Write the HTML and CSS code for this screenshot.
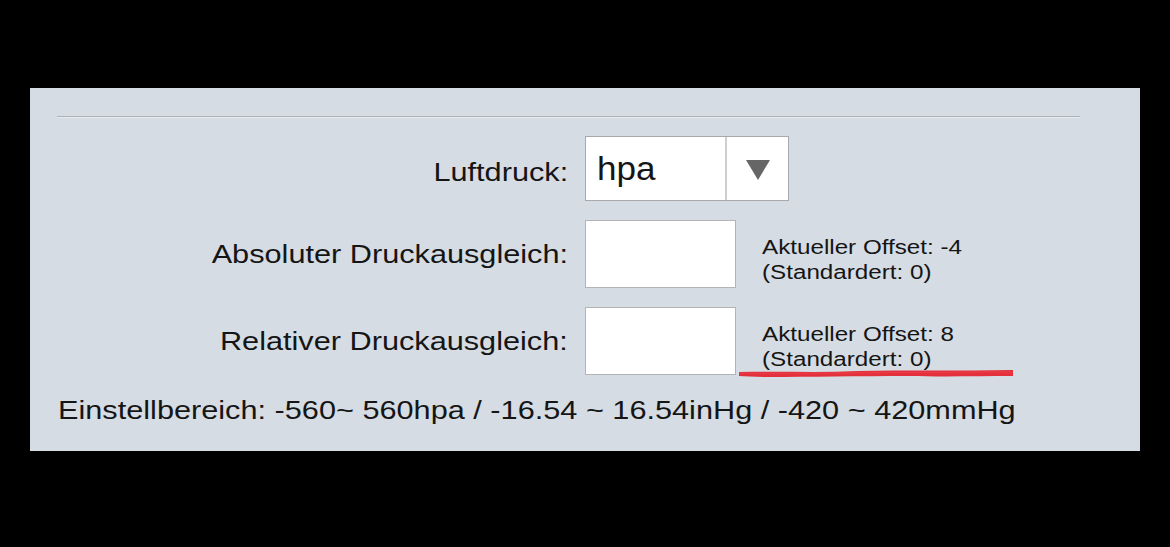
FILE: index.html
```html
<!DOCTYPE html>
<html lang="de">
<head>
<meta charset="utf-8">
<title>Luftdruck</title>
<link rel="stylesheet" href="styles.css">
</head>
<body>
<div class="panel">
  <div class="rule"></div>
  <div class="form">
    <div class="label label-select"><span class="wide-r">Luftdruck:</span></div>
    <div class="control">
      <div class="select">
        <span class="select-value"><span class="wide-l">hpa</span></span>
        <span class="select-btn"><svg width="24" height="20" viewBox="0 0 24 20"><polygon points="0,0 24,0 12,20" fill="#666"/></svg></span>
      </div>
    </div>
    <div class="label"><span class="wide-r">Absoluter Druckausgleich:</span></div>
    <div class="control">
      <div class="input"></div>
      <div class="hint"><span class="wide-h">Aktueller Offset: -4<br>(Standardert: 0)</span></div>
    </div>
    <div class="label"><span class="wide-r">Relativer Druckausgleich:</span></div>
    <div class="control">
      <div class="input"></div>
      <div class="hint"><span class="wide-h">Aktueller Offset: 8<br>(Standardert: 0)</span>
        <svg class="scribble" width="276" height="12" viewBox="0 0 276 12"><path d="M1,5 C40,4 80,6 120,4 C170,3 220,4 275,3 L275,9 C240,9 210,10 170,9 C120,9 70,10 30,10 C18,10 8,9 1,9 Z" fill="#e3303c"/><path d="M1,6 C60,7 150,5 275,5" stroke="#ef4a55" stroke-width="1" fill="none" opacity="0.6"/></svg>
      </div>
    </div>
  </div>
  <div class="range"><span class="wide-l">Einstellbereich: -560~ 560hpa / -16.54 ~ 16.54inHg / -420 ~ 420mmHg</span></div>
</div>
</body>
</html>
```
FILE: styles.css
```css
html, body {
  margin: 0;
  padding: 0;
  background: #000;
}
body {
  font-family: "Liberation Sans", Arial, sans-serif;
  color: #151515;
  height: 547px;
  overflow: hidden;
}
.panel {
  margin: 88px 0 0 30px;
  width: 1110px;
  height: 363px;
  background: #d5dce3;
  padding: 28px 60px 0 27px;
  box-sizing: border-box;
}
.rule {
  height: 1px;
  background: #a9b1b9;
  border-bottom: 1px solid #e6eaee;
}
.form {
  display: grid;
  grid-template-columns: 511px auto;
  column-gap: 17px;
  row-gap: 19px;
  margin-top: 18px;
}
.wide-r {
  display: inline-block;
  transform: scaleX(1.18);
  transform-origin: right center;
}
.wide-l {
  display: inline-block;
  transform: scaleX(1.18);
  transform-origin: left center;
}
.wide-h {
  display: inline-block;
  transform: scaleX(1.21);
  transform-origin: left center;
}
.label {
  text-align: right;
  font-size: 26px;
  align-self: center;
  margin-top: 1px;
  white-space: nowrap;
}
.label-select {
  margin-top: 7px;
}
.control {
  display: flex;
  align-items: center;
}
.select {
  width: 204px;
  height: 65px;
  box-sizing: border-box;
  border: 1px solid #a9a9a9;
  background: #fff;
  display: flex;
}
.select-value {
  flex: 1;
  font-size: 34px;
  line-height: 63px;
  padding-left: 11px;
  border-right: 2px solid #cfcfcf;
}
.select-value .wide-l {
  transform: scaleX(1.03);
}
.select-btn {
  width: 61px;
  display: flex;
  align-items: center;
  justify-content: center;
  padding-top: 2px;
}
.input {
  width: 151px;
  height: 68px;
  box-sizing: border-box;
  border: 1px solid #b4b4b4;
  background: #fff;
}
.hint {
  margin-left: 26px;
  margin-top: 11px;
  font-size: 20px;
  line-height: 25px;
  position: relative;
  white-space: nowrap;
}
.scribble {
  position: absolute;
  left: -24px;
  top: 45px;
}
.range {
  margin-top: 20px;
  font-size: 26px;
  padding-left: 1px;
  white-space: nowrap;
}
```
